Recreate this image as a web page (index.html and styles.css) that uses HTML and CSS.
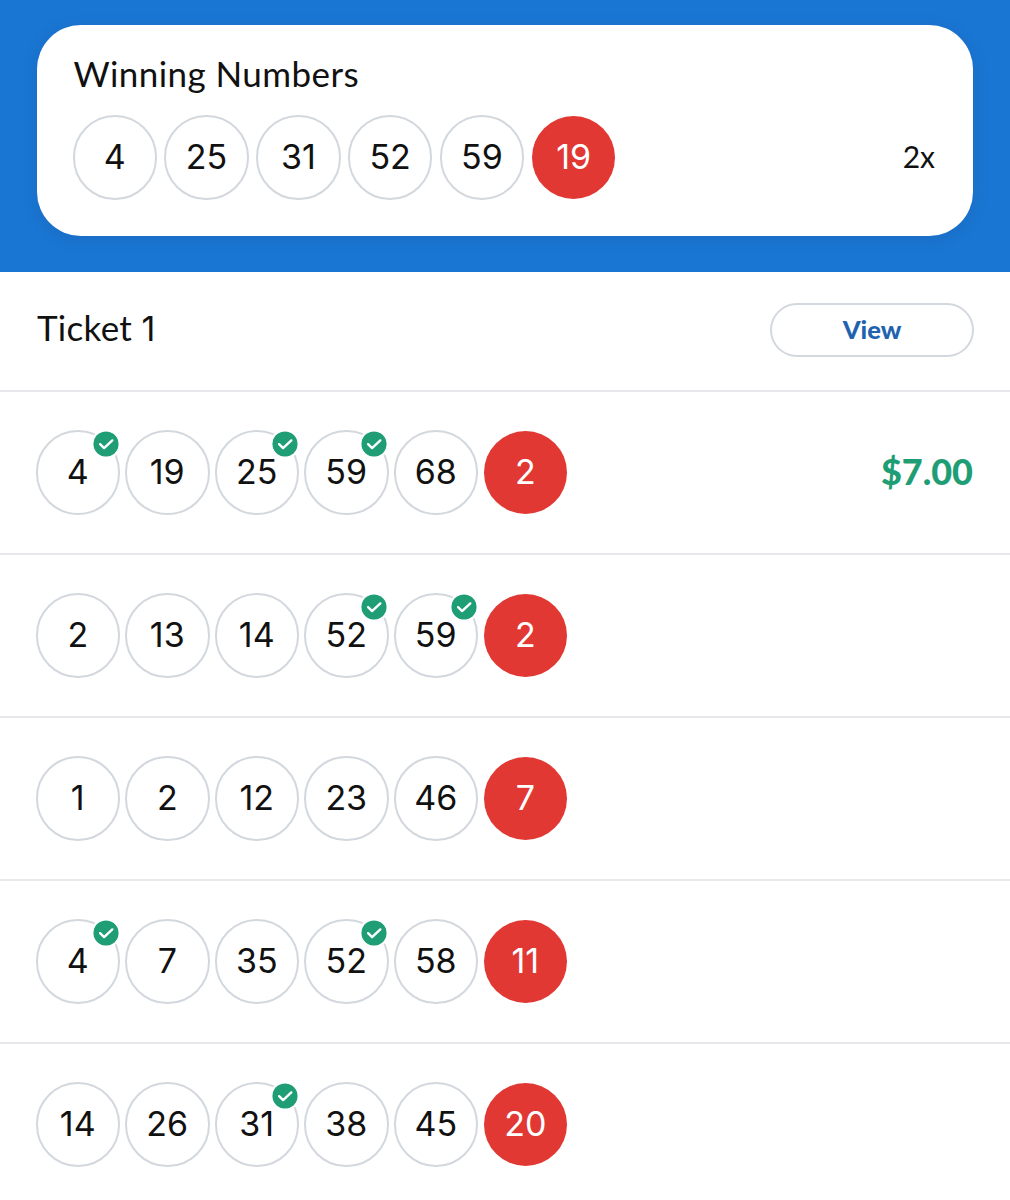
FILE: index.html
```html
<!DOCTYPE html>
<html lang="en">
<head>
  <meta charset="UTF-8">
  <meta name="viewport" content="width=device-width, initial-scale=1.0">
  <title>Winning Numbers</title>
  <link rel="stylesheet" href="styles.css">
</head>
<body>
  <!-- check icon shared by all matched balls -->
  <svg class="sprite" width="0" height="0">
    <symbol id="check" viewBox="0 0 26 26">
      <circle cx="13" cy="13" r="12.6" fill="#1f9e76"/>
      <path d="M7.1 13.2 L11.1 17.1 L19.3 9.4" fill="none" stroke="#fff" stroke-width="2.4" stroke-linecap="round" stroke-linejoin="round"/>
    </symbol>
  </svg>

  <header class="header">
    <section class="card">
      <h1 class="title card-title">Winning Numbers</h1>
      <div class="line">
        <ul class="balls">
          <li class="ball">4</li>
          <li class="ball">25</li>
          <li class="ball">31</li>
          <li class="ball">52</li>
          <li class="ball">59</li>
          <li class="ball ball-red">19</li>
        </ul>
        <span class="multiplier">2x</span>
      </div>
    </section>
  </header>

  <main>
    <div class="ticket-head">
      <h2 class="title ticket-title">Ticket <span class="num">1</span></h2>
      <button class="view-btn" type="button">View</button>
    </div>

    <div class="row">
      <ul class="balls">
        <li class="ball">4<svg class="check"><use href="#check"/></svg></li>
        <li class="ball">19</li>
        <li class="ball">25<svg class="check"><use href="#check"/></svg></li>
        <li class="ball">59<svg class="check"><use href="#check"/></svg></li>
        <li class="ball">68</li>
        <li class="ball ball-red">2</li>
      </ul>
      <span class="prize">$7.00</span>
    </div>

    <div class="row">
      <ul class="balls">
        <li class="ball">2</li>
        <li class="ball">13</li>
        <li class="ball">14</li>
        <li class="ball">52<svg class="check"><use href="#check"/></svg></li>
        <li class="ball">59<svg class="check"><use href="#check"/></svg></li>
        <li class="ball ball-red">2</li>
      </ul>
    </div>

    <div class="row">
      <ul class="balls">
        <li class="ball">1</li>
        <li class="ball">2</li>
        <li class="ball">12</li>
        <li class="ball">23</li>
        <li class="ball">46</li>
        <li class="ball ball-red">7</li>
      </ul>
    </div>

    <div class="row">
      <ul class="balls">
        <li class="ball">4<svg class="check"><use href="#check"/></svg></li>
        <li class="ball">7</li>
        <li class="ball">35</li>
        <li class="ball">52<svg class="check"><use href="#check"/></svg></li>
        <li class="ball">58</li>
        <li class="ball ball-red">11</li>
      </ul>
    </div>

    <div class="row">
      <ul class="balls">
        <li class="ball">14</li>
        <li class="ball">26</li>
        <li class="ball">31<svg class="check"><use href="#check"/></svg></li>
        <li class="ball">38</li>
        <li class="ball">45</li>
        <li class="ball ball-red">20</li>
      </ul>
    </div>
  </main>
</body>
</html>
```
FILE: styles.css
```css
* {
  box-sizing: border-box;
}
html, body {
  margin: 0;
  padding: 0;
  height: 1200px;
  overflow: hidden;
}
body {
  background: #fff;
  color: #111;
  font-family: Lato, sans-serif;
}
.sprite {
  position: absolute;
}
.header {
  height: 272px;
  padding: 25px 37px 0;
  background: #1976d2;
}
.card {
  height: 211px;
  padding: 26px 38px 0 35.5px;
  border-radius: 44px;
  background: #fff;
  box-shadow: 0 3px 14px rgba(40, 80, 150, .25);
}
.title {
  margin: 0;
  font-size: 35px;
  font-weight: 400;
  line-height: 44px;
}
.card-title {
  padding-left: 1px;
  letter-spacing: .42px;
}
.num {
  font-family: Inter, sans-serif;
  font-size: 34px;
}
.line {
  display: flex;
  align-items: center;
  justify-content: space-between;
  margin-top: 20px;
}
.balls {
  display: flex;
  gap: 5px;
  margin: 0;
  padding: 0;
  list-style: none;
}
.card .balls {
  gap: 7.3px;
}
.ball {
  position: relative;
  display: flex;
  align-items: center;
  justify-content: center;
  width: 84.5px;
  height: 84.5px;
  padding-bottom: 2px;
  border: 2px solid #d3d8de;
  border-radius: 50%;
  font-family: Inter, sans-serif;
  font-size: 34px;
}
.ball-red {
  width: 83px;
  height: 83px;
  margin: .75px;
  border: 0;
  background: #e13834;
  color: #fff;
}
.check {
  position: absolute;
  top: -1px;
  right: -.8px;
  width: 26px;
  height: 26px;
  border-radius: 50%;
  box-shadow: 0 0 0 2px #fff;
}
.multiplier {
  padding-bottom: 2px;
  font-size: 30px;
}
.ticket-head {
  display: flex;
  align-items: center;
  justify-content: space-between;
  height: 118px;
  padding: 0 36px 2px 37px;
}
.ticket-title {
  padding-bottom: 5px;
  letter-spacing: .3px;
}
.view-btn {
  width: 204px;
  height: 54px;
  padding: 0 0 2px;
  border: 2px solid #d3d8de;
  border-radius: 27px;
  background: #fff;
  color: #1f63b0;
  font-family: Lato, sans-serif;
  font-size: 25.5px;
  font-weight: 900;
}
.row {
  display: flex;
  align-items: center;
  justify-content: space-between;
  height: 163px;
  padding: 0 37px 0 35.5px;
  border-top: 2px solid #e6e8eb;
}
.prize {
  padding-bottom: 4px;
  color: #1f9e76;
  font-size: 36px;
  font-weight: 900;
}
```
